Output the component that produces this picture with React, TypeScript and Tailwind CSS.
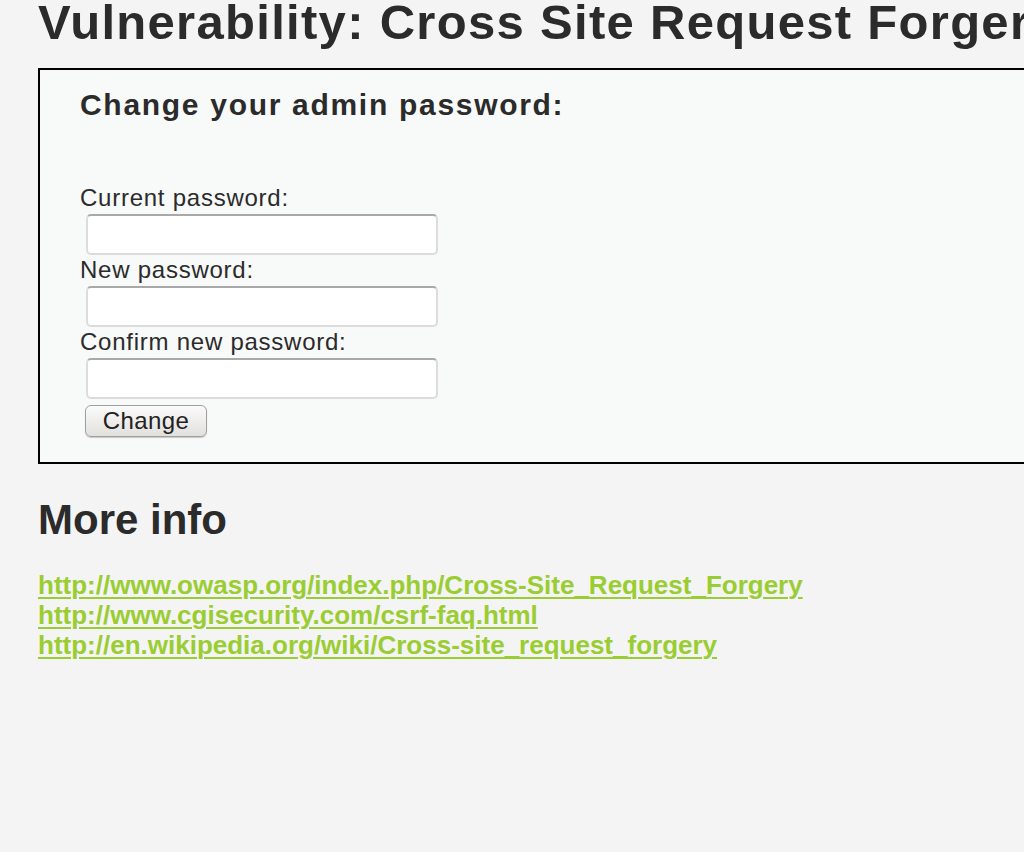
import React from "react";

export default function App() {
  const font = { fontFamily: '"Liberation Sans", Arial, sans-serif' };
  const inputCls =
    "ml-[6px] mt-[2px] w-[352px] h-[41px] bg-white border-2 border-[#dcdcdc] border-t-[#a9a9a9] rounded-[5px]";
  return (
    <div className="w-[1024px] h-[852px] overflow-hidden bg-[#f4f4f4] text-[#2b2b2b]" style={font}>
      <div className="pl-[38px]">
        <h1 className="text-[49px] font-bold leading-[50px] mt-[-3px] whitespace-nowrap tracking-[1.3px]">
          Vulnerability: Cross Site Request Forgery
        </h1>
        <div className="mt-[21px] w-[1100px] border-2 border-black bg-[#f8f9f9] pl-[40px] pt-[18px] pb-[25px]">
          <h3 className="text-[30px] font-bold leading-[34px] whitespace-nowrap tracking-[1.7px]">
            Change your admin password:
          </h3>
          <div className="mt-[62px] flex flex-col items-start">
            <label className="text-[24px] leading-[28px] tracking-[0.75px]">Current password:</label>
            <input type="password" className={inputCls} />
            <label className="text-[24px] leading-[28px] mt-[1px] tracking-[0.75px]">New password:</label>
            <input type="password" className={inputCls} />
            <label className="text-[24px] leading-[28px] mt-[1px] tracking-[0.75px]">Confirm new password:</label>
            <input type="password" className={inputCls} />
            <button className="ml-[5px] mt-[6px] w-[122px] h-[32px] text-[24px] leading-none tracking-[0.4px] text-[#222] rounded-[6px] border border-[#a0a0a0] bg-gradient-to-b from-[#fbfbfb] to-[#e2e0dd] shadow-[0_1px_1px_rgba(0,0,0,0.2)]">
              Change
            </button>
          </div>
        </div>
        <h2 className="mt-[32px] text-[42px] font-bold leading-[48px]">More info</h2>
        <ul className="mt-[26px] flex flex-col">
          {[
            "http://www.owasp.org/index.php/Cross-Site_Request_Forgery",
            "http://www.cgisecurity.com/csrf-faq.html",
            "http://en.wikipedia.org/wiki/Cross-site_request_forgery",
          ].map((u) => (
            <li key={u} className="text-[26px] leading-[30px] h-[30px]">
              <a href="#" className="font-bold text-[#9acd32] underline decoration-2 underline-offset-[3px]">
                {u}
              </a>
            </li>
          ))}
        </ul>
      </div>
    </div>
  );
}
